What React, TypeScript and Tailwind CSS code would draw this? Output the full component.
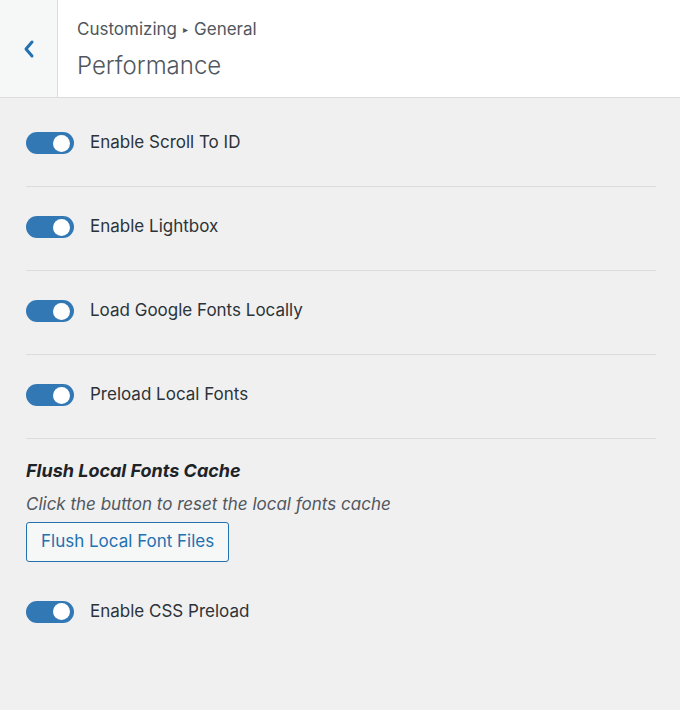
const font = "font-['Inter','Liberation_Sans',sans-serif]";

const Toggle = () => (
    <span className="relative inline-flex items-center w-[48px] h-[22px] rounded-full bg-[#3178b5] shrink-0">
        <span className="absolute right-[4px] w-[17px] h-[17px] rounded-full bg-white" />
    </span>
);

const ToggleRow = ({ label }: { label: string }) => (
    <div className="h-[84px] pt-[29px] border-b border-[#dcdcde]">
        <div className="flex items-center gap-4 h-[22px]">
            <Toggle />
            <span className="text-[17px] text-[#2c3338]">{label}</span>
        </div>
    </div>
);

export default function App() {
    return (
        <div className={`${font} w-[680px] h-[710px] bg-[#f0f0f1] overflow-hidden`}>
            <div className="flex h-[98px] bg-white border-b border-[#dcdcde]">
                <button className="w-[58px] shrink-0 flex items-center justify-center bg-[#f6f7f7] border-r border-[#dcdcde]">
                    <svg width="12" height="20" viewBox="0 0 12 20" fill="none">
                        <path d="M9 3 L3 10 L9 17" stroke="#2271b1" strokeWidth="3" strokeLinecap="round" strokeLinejoin="round" />
                    </svg>
                </button>
                <div className="pl-[19px] pt-[17px]">
                    <div className="flex items-center gap-[6px] text-[17px] text-[#50575e]">
                        <span>Customizing</span>
                        <span className="text-[10px]">▸</span>
                        <span>General</span>
                    </div>
                    <div className="text-[24px] font-light text-[#50575e] mt-[6px] leading-[34px]">Performance</div>
                </div>
            </div>

            <div className="px-[26px] pr-[24px] mt-[5px]">
                <ToggleRow label="Enable Scroll To ID" />
                <ToggleRow label="Enable Lightbox" />
                <ToggleRow label="Load Google Fonts Locally" />
                <ToggleRow label="Preload Local Fonts" />

                <div className="pt-[20px]">
                    <h3 className="text-[18px] font-bold italic text-[#1d2327] leading-[24px]">Flush Local Fonts Cache</h3>
                    <p className="text-[17px] italic text-[#50575e] mt-[9px] leading-[24px]">Click the button to reset the local fonts cache</p>
                    <button className="mt-[6px] h-[40px] px-[14px] border border-[#2271b1] rounded-[3px] bg-[#f6f7f7] text-[#2271b1] text-[17px]">
                        Flush Local Font Files
                    </button>
                </div>

                <div className="flex items-center gap-4 mt-[37px]">
                    <Toggle />
                    <span className="text-[17px] text-[#2c3338]">Enable CSS Preload</span>
                </div>
            </div>
        </div>
    );
}
